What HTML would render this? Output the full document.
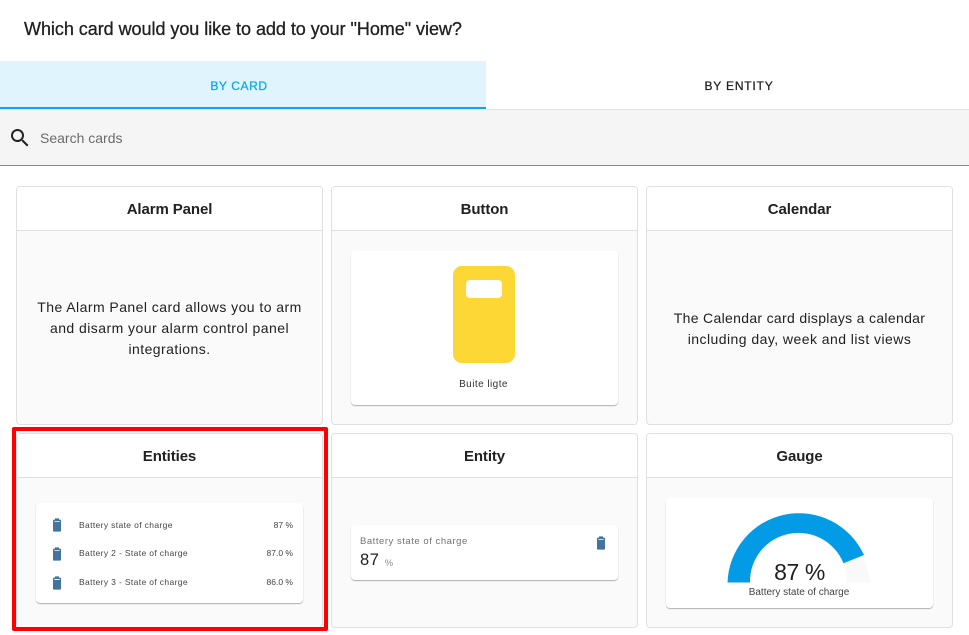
<!DOCTYPE html>
<html><head><meta charset="utf-8"><style>
html,body{margin:0;padding:0;background:#fff;width:969px;height:635px;overflow:hidden;font-family:"Liberation Sans",sans-serif;color:#212121}
.a{position:absolute;white-space:nowrap}
.c{text-align:center}
.card{position:absolute;width:305px;border:1px solid #e0e0e0;border-radius:4px;background:#fafafa;box-sizing:content-box;overflow:hidden}
.hd{height:43px;background:#fff;border-bottom:1px solid #e0e0e0;text-align:center;font-weight:700;font-size:15px;letter-spacing:-.1px;line-height:45px;color:#212121}
.in{position:absolute;background:#fff;border-radius:4px;box-shadow:0 1px 1px rgba(0,0,0,.3)}
.desc{position:absolute;left:0;width:305px;text-align:center;font-size:14px;line-height:21px;letter-spacing:.45px;color:#212121}
.s{font-size:8.5px;color:#444;letter-spacing:.36px;line-height:11px}
.v{letter-spacing:0}
</style></head><body>
<div class="a" style="left:24px;top:18px;font-size:18px;line-height:22px;letter-spacing:-.04px;-webkit-text-stroke:.3px #212121">Which card would you like to add to your "Home" view?</div>

<div class="a" style="left:0;top:61px;width:486px;height:46px;background:#dff4fd"></div>
<div class="a" style="left:0;top:107px;width:486px;height:2px;background:#03a9f4"></div>
<div class="a" style="left:486px;top:109px;width:483px;height:1px;background:#e0e0e0"></div>
<div class="a c" style="left:0;top:78px;width:478px;font-size:12px;line-height:16px;letter-spacing:.6px;color:#03a9f4;-webkit-text-stroke:.25px #03a9f4">BY CARD</div>
<div class="a c" style="left:486px;top:78px;width:506px;font-size:12px;line-height:16px;letter-spacing:.8px;color:#212121;-webkit-text-stroke:.25px #212121">BY ENTITY</div>

<div class="a" style="left:0;top:110px;width:969px;height:55px;background:#f5f5f5"></div>
<div class="a" style="left:0;top:165px;width:969px;height:1px;background:#8c8c8c"></div>
<svg class="a" style="left:8px;top:126px" width="24" height="24" viewBox="0 0 24 24"><path fill="#212121" d="M9.5,3A6.5,6.5 0 0,1 16,9.5C16,11.11 15.41,12.59 14.44,13.73L14.71,14H15.5L20.5,19L19,20.5L14,15.5V14.71L13.73,14.44C12.59,15.41 11.11,16 9.5,16A6.5,6.5 0 0,1 3,9.5A6.5,6.5 0 0,1 9.5,3M9.5,5C7,5 5,7 5,9.5C5,12 7,14 9.5,14C12,14 14,12 14,9.5C14,7 12,5 9.5,5Z"/></svg>
<div class="a" style="left:40px;top:130px;font-size:14px;line-height:16px;letter-spacing:0;color:#6b6b6b">Search cards</div>

<div class="card" style="left:16px;top:186px;height:237px">
  <div class="hd">Alarm Panel</div>
  <div class="desc" style="top:110px">The Alarm Panel card allows you to arm<br>and disarm your alarm control panel<br>integrations.</div>
</div>

<div class="card" style="left:331px;top:186px;height:237px">
  <div class="hd">Button</div>
  <div class="in" style="left:19px;top:64px;width:267px;height:154px">
    <div class="a" style="left:102px;top:15px;width:62px;height:97px;border-radius:9px;background:#fdd835"></div>
    <div class="a" style="left:115px;top:29px;width:36px;height:18px;border-radius:4px;background:#fff"></div>
    <div class="a c s" style="left:0;top:128px;width:265px;font-size:10px;letter-spacing:.45px;color:#333">Buite ligte</div>
  </div>
</div>

<div class="card" style="left:646px;top:186px;height:237px">
  <div class="hd">Calendar</div>
  <div class="desc" style="top:121px"><span style="letter-spacing:.32px">The Calendar card displays a calendar</span><br>including day, week and list views</div>
</div>

<div class="card" style="left:16px;top:433px;height:193px">
  <div class="hd">Entities</div>
  <div class="in" style="left:19px;top:69px;width:267px;height:100px">
    <svg class="a" style="left:13px;top:14px" width="16" height="16" viewBox="0 0 24 24"><path fill="#44739e" d="M16.67,4H15V2H9V4H7.33A1.33,1.33 0 0,0 6,5.33V20.67C6,21.4 6.6,22 7.33,22H16.67A1.33,1.33 0 0,0 18,20.67V5.33C18,4.6 17.4,4 16.67,4Z"/><rect x="8" y="6" width="8" height="1.5" fill="#cfdbe6"/></svg>
    <svg class="a" style="left:13px;top:43px" width="16" height="16" viewBox="0 0 24 24"><path fill="#44739e" d="M16.67,4H15V2H9V4H7.33A1.33,1.33 0 0,0 6,5.33V20.67C6,21.4 6.6,22 7.33,22H16.67A1.33,1.33 0 0,0 18,20.67V5.33C18,4.6 17.4,4 16.67,4Z"/><rect x="8" y="6" width="8" height="1.5" fill="#cfdbe6"/></svg>
    <svg class="a" style="left:13px;top:72px" width="16" height="16" viewBox="0 0 24 24"><path fill="#44739e" d="M16.67,4H15V2H9V4H7.33A1.33,1.33 0 0,0 6,5.33V20.67C6,21.4 6.6,22 7.33,22H16.67A1.33,1.33 0 0,0 18,20.67V5.33C18,4.6 17.4,4 16.67,4Z"/><rect x="8" y="6" width="8" height="1.5" fill="#fff"/></svg>
    <div class="a s" style="left:43px;top:16.5px">Battery state of charge</div>
    <div class="a s v" style="right:10px;top:16.5px">87 %</div>
    <div class="a s" style="left:43px;top:44.5px">Battery 2 - State of charge</div>
    <div class="a s v" style="right:10px;top:44.5px">87.0 %</div>
    <div class="a s" style="left:43px;top:73.5px">Battery 3 - State of charge</div>
    <div class="a s v" style="right:10px;top:73.5px">86.0 %</div>
  </div>
</div>

<div class="card" style="left:331px;top:433px;height:193px">
  <div class="hd">Entity</div>
  <div class="in" style="left:19px;top:91px;width:267px;height:55px">
    <div class="a" style="left:9px;top:11px;font-size:9.5px;line-height:12px;letter-spacing:.53px;color:#727272">Battery state of charge</div>
    <div class="a" style="left:9px;top:25px;font-size:16.5px;line-height:20px;letter-spacing:.6px;color:#212121">87</div>
    <div class="a" style="left:34px;top:32px;font-size:9px;line-height:12px;color:#8a8a8a">%</div>
    <svg class="a" style="left:242px;top:10px" width="16" height="16" viewBox="0 0 24 24"><path fill="#44739e" d="M16.67,4H15V2H9V4H7.33A1.33,1.33 0 0,0 6,5.33V20.67C6,21.4 6.6,22 7.33,22H16.67A1.33,1.33 0 0,0 18,20.67V5.33C18,4.6 17.4,4 16.67,4Z"/><rect x="8" y="6" width="8" height="1.5" fill="#cfdbe6"/></svg>
  </div>
</div>

<div class="card" style="left:646px;top:433px;height:193px">
  <div class="hd">Gauge</div>
  <div class="in" style="left:19px;top:64px;width:267px;height:110px">
    <svg class="a" style="left:61px;top:13px" width="144" height="73" viewBox="0 0 144 73">
      <path fill="#f9f9f9" d="M0.5,71.5 A71.5,71.5 0 0 1 143,71.5 L120,71.5 A48.5,48.5 0 0 0 23,71.5 Z"/>
      <path fill="#039be5" d="M0.5,71.5 A71.5,71.5 0 0 1 137,44 L116.5,52.3 A48.5,48.5 0 0 0 23,71.5 Z"/>
    </svg>
    <div class="a c" style="left:0;top:60px;width:267px;font-size:23px;line-height:28px;letter-spacing:-.4px;color:#212121">87 %</div>
    <div class="a c" style="left:0;top:89px;width:266px;font-size:10px;line-height:12px;letter-spacing:0;color:#444">Battery state of charge</div>
  </div>
</div>

<div class="a" style="left:11.5px;top:427px;width:316px;height:204px;border:4px solid #f00;box-sizing:border-box;border-radius:2px"></div>
</body></html>
